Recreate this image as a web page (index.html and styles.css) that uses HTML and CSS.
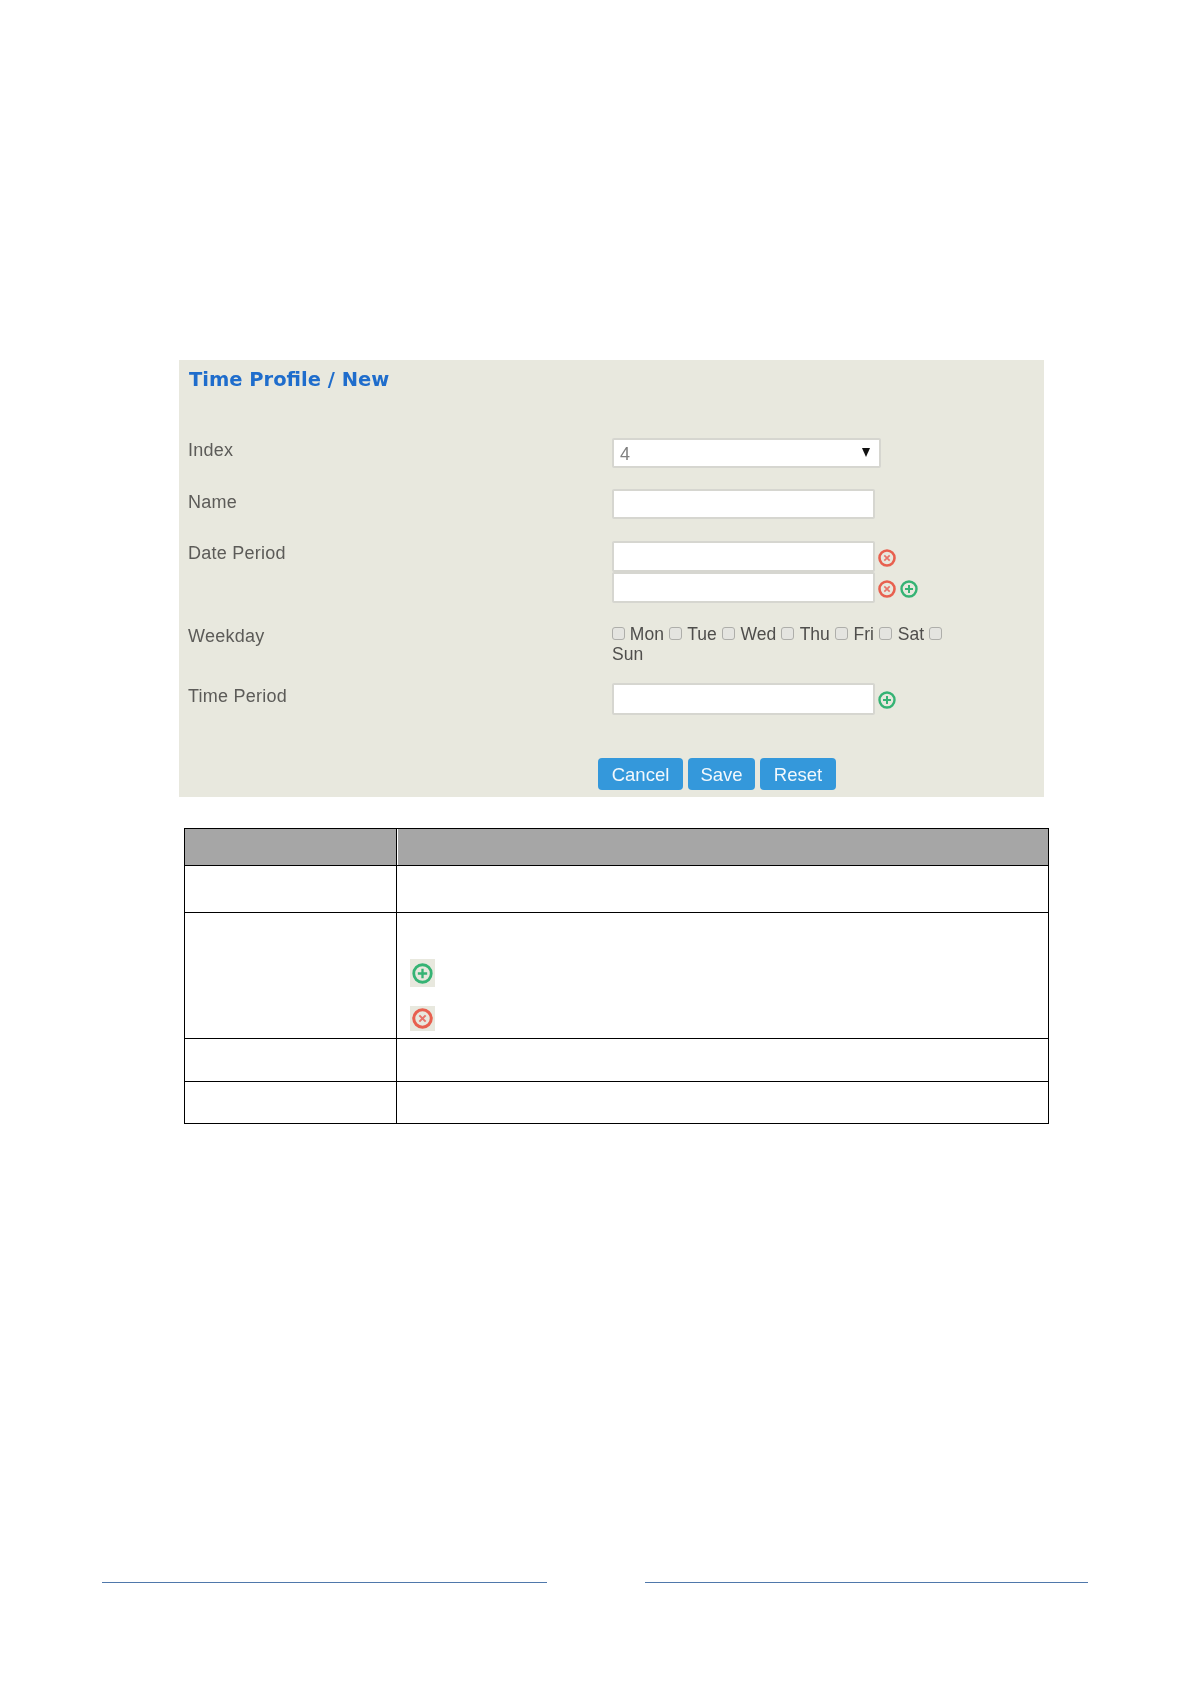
FILE: index.html
```html
<!DOCTYPE html>
<html lang="en">
<head>
<meta charset="utf-8">
<title>Time Profile / New</title>
<link rel="stylesheet" href="styles.css">
</head>
<body>
<svg class="defs" width="0" height="0" aria-hidden="true">
  <symbol id="ico-del" viewBox="0 0 18 18">
    <circle cx="9" cy="9" r="7.5" fill="none" stroke="#e8604f" stroke-width="2.6"/>
    <path d="M6.3 6.3l5.4 5.4M11.7 6.3l-5.4 5.4" fill="none" stroke="#e8746a" stroke-width="1.7"/>
  </symbol>
  <symbol id="ico-add" viewBox="0 0 18 18">
    <circle cx="9" cy="9" r="7.5" fill="none" stroke="#35b374" stroke-width="2.4"/>
    <path d="M9 5v8M5 9h8" fill="none" stroke="#35b374" stroke-width="2"/>
  </symbol>
</svg>
<main class="page">
  <section class="panel">
    <h1 class="panel-title">Time Profile / New</h1>
    <div class="row row-index">
      <div class="label">Index</div>
      <div class="select"><span class="select-value">4</span><span class="caret"></span></div>
    </div>
    <div class="row row-name">
      <div class="label label-low">Name</div>
      <input class="text" type="text">
    </div>
    <div class="row row-date">
      <div class="label">Date Period</div>
      <div class="stack">
        <div class="field-line"><input class="text text-tall" type="text"><svg class="ico"><use href="#ico-del"/></svg></div>
        <div class="field-line field-line-low"><input class="text text-tall" type="text"><svg class="ico"><use href="#ico-del"/></svg><svg class="ico ico-next"><use href="#ico-add"/></svg></div>
      </div>
    </div>
    <div class="row row-week">
      <div class="label">Weekday</div>
      <div class="days">
        <label class="day"><input type="checkbox"> Mon</label>
        <label class="day"><input type="checkbox"> Tue</label>
        <label class="day"><input type="checkbox"> Wed</label>
        <label class="day"><input type="checkbox"> Thu</label>
        <label class="day"><input type="checkbox"> Fri</label>
        <label class="day"><input type="checkbox"> Sat</label>
        <label class="day"><input type="checkbox"> Sun</label>
      </div>
    </div>
    <div class="row row-time">
      <div class="label label-low">Time Period</div>
      <div class="field-line"><input class="text text-time" type="text"><svg class="ico"><use href="#ico-add"/></svg></div>
    </div>
    <div class="actions">
      <button class="btn btn-cancel" type="button">Cancel</button>
      <button class="btn btn-save" type="button">Save</button>
      <button class="btn btn-reset" type="button">Reset</button>
    </div>
  </section>
  <table class="spec">
    <colgroup><col class="col-a"><col></colgroup>
    <thead>
      <tr class="tr-head"><th></th><th></th></tr>
    </thead>
    <tbody>
      <tr class="tr-1"><td></td><td></td></tr>
      <tr class="tr-2">
        <td></td>
        <td>
          <div class="chip chip-add"><svg class="chip-ico"><use href="#ico-add"/></svg></div>
          <div class="chip chip-del"><svg class="chip-ico"><use href="#ico-del"/></svg></div>
        </td>
      </tr>
      <tr class="tr-3"><td></td><td></td></tr>
      <tr class="tr-4"><td></td><td></td></tr>
    </tbody>
  </table>
  <footer class="foot">
    <div class="foot-line"></div>
    <div class="foot-line foot-right"></div>
  </footer>
</main>
</body>
</html>
```
FILE: styles.css
```css
* { box-sizing: border-box; }
html, body { margin: 0; padding: 0; background: #fff; }
body { font-family: "Liberation Sans", Arial, sans-serif; }
.defs { display: block; height: 0; }
.page { width: 1191px; height: 1684px; padding-top: 360px; overflow: hidden; }

.panel {
  width: 865px;
  height: 437px;
  margin-left: 179px;
  padding: 0 0 0 9px;
  background: #e8e8de;
  color: #5c5b58;
  font-size: 18px;
  filter: blur(0.4px);
}
.panel-title {
  margin: 0;
  height: 78px;
  padding: 8px 0 0 1px;
  font-family: "DejaVu Sans", sans-serif;
  font-size: 19.5px;
  line-height: 24px;
  font-weight: 700;
  color: #1f6dcc;
}
.row { display: flex; align-items: flex-start; }
.label { width: 424px; flex: none; line-height: 24px; letter-spacing: 0.25px; }
.label-low { padding-top: 1px; }
.row-name { margin-top: 21px; }
.row-date { margin-top: 22px; }
.row-week { margin-top: 21px; }
.row-time { margin-top: 19px; }

.select {
  display: flex;
  align-items: center;
  justify-content: space-between;
  width: 269px;
  height: 30px;
  padding: 2px 9px 0 6px;
  background: #fff;
  border: 2px solid #d6d6d0;
  border-radius: 2px;
}
.select-value { font-size: 18px; color: #808080; }
.caret {
  width: 0; height: 0;
  margin-top: -3px;
  border-left: 4.5px solid transparent;
  border-right: 4.5px solid transparent;
  border-top: 9px solid #111;
}
.text {
  display: block;
  width: 263px;
  height: 30px;
  padding: 0;
  background: #fff;
  border: 2px solid #d6d6d0;
  border-radius: 2px;
}
.text-tall { height: 31px; }
.text-time { height: 32px; }
.stack { display: flex; flex-direction: column; }
.field-line { display: flex; align-items: center; }
.ico { width: 18px; height: 18px; margin-left: 3px; margin-top: 2px; flex: none; }
.field-line-low .ico { margin-top: 3px; }
.ico-next { margin-left: 4px; }

.days { width: 340px; line-height: 20px; font-size: 17.5px; color: #4f4e4c; }
.day { display: inline; }
.day input {
  appearance: none;
  width: 13px;
  height: 13px;
  margin: 0 1px 0 0;
  vertical-align: 0;
  background: #e4e4e0;
  border: 1.5px solid #aeaeaa;
  border-radius: 3px;
}
.day:first-child input { margin-right: 0; }

.actions { display: flex; gap: 5px; margin: 43px 0 0 410px; }
.btn {
  height: 32px;
  padding: 1px 0 0;
  border: 0;
  border-radius: 4px;
  background: #3498db;
  color: #f2f8fc;
  font: 18.5px "Liberation Sans", Arial, sans-serif;
}
.btn-cancel { width: 85px; }
.btn-save { width: 67px; }
.btn-reset { width: 76px; }

.spec {
  width: 865px;
  margin: 31px 0 0 184px;
  border-collapse: collapse;
  table-layout: fixed;
}
.spec th, .spec td { padding: 0; border: 1px solid #000; vertical-align: top; }
.spec th { background: #a6a6a6; }
.spec th + th { box-shadow: inset 1px 0 #fff; }
.col-a { width: 212px; }
.tr-head { height: 37px; }
.tr-1 { height: 47px; }
.tr-2 { height: 126px; }
.tr-3 { height: 43px; }
.tr-4 { height: 42px; }
.chip {
  display: flex;
  align-items: center;
  justify-content: center;
  width: 25px;
  margin-left: 13px;
  background: #e8e8de;
}
.chip-add { height: 28px; margin-top: 46px; padding-top: 1px; }
.chip-del { height: 25px; margin-top: 19px; }
.chip-ico { width: 21px; height: 21px; }

.foot { display: flex; gap: 98px; margin: 458px 0 0 102px; }
.foot-line { width: 445px; height: 1px; background: #4f78ab; }
.foot-right { width: 443px; }
```
